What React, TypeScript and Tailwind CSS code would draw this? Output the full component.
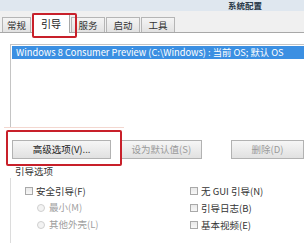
import React from "react";

const font = { fontFamily: '"Noto Sans CJK SC", "Noto Sans", sans-serif' };

function Tab({ label, selected }: { label: string; selected?: boolean }) {
  if (selected) {
    return (
      <div className="h-[20px] w-[38px] bg-white border border-[#a8a8a8] border-b-0 flex items-center justify-center text-[10px] text-[#222] -mb-px relative z-10">
        {label}
      </div>
    );
  }
  return (
    <div className="h-[15px] flex items-center justify-center border border-[#b5b5b5] border-b-0 bg-gradient-to-b from-[#f4f4f4] to-[#e2e2e2] text-[9.5px] text-[#333]" style={{ width: label === "常规" ? 29 : 34 }}>
      {label}
    </div>
  );
}

function Btn({ label, w, dim }: { label: string; w: number; dim?: boolean }) {
  return (
    <div
      className={`h-[19px] flex items-center justify-center border border-[#b2b2b2] bg-gradient-to-b from-[#f6f6f6] to-[#e1e1e1] text-[9.5px] ${dim ? "text-[#9a9a9a]" : "text-[#222]"}`}
      style={{ width: w }}
    >
      {label}
    </div>
  );
}

function Check({ label }: { label: string }) {
  return (
    <div className="flex items-center gap-[3px] h-[16px]">
      <div className="w-[8px] h-[8px] border border-[#a9a9a9] bg-gradient-to-b from-[#e9e9e9] to-[#f7f7f7]" />
      <span className="text-[9.5px] text-[#333]">{label}</span>
    </div>
  );
}

function Radio({ label }: { label: string }) {
  return (
    <div className="flex items-center gap-[4px] h-[17px] pl-[12px]">
      <div className="w-[8px] h-[8px] rounded-full border border-[#cfcfcf] bg-[#f3f3f3]" />
      <span className="text-[9.5px] text-[#a0a0a0]">{label}</span>
    </div>
  );
}

export default function App() {
  return (
    <div className="w-[304px] h-[243px] overflow-hidden bg-white relative" style={font}>
      {/* title bar */}
      <div className="h-[11px] bg-[#dfe7ef] flex justify-end items-start pr-[42px]">
        <span className="text-[8.5px] leading-[10px] font-bold text-[#2a3a4a]">系统配置</span>
      </div>
      {/* tab strip */}
      <div className="h-[22px] bg-[#f0f0f0] flex items-end pl-[2px] gap-[1px] border-b border-[#a8a8a8]">
        <Tab label="常规" />
        <Tab label="引导" selected />
        <Tab label="服务" />
        <Tab label="启动" />
        <Tab label="工具" />
      </div>
      {/* content */}
      <div className="flex flex-col">
        <div className="ml-[10px] mt-[11px] h-[83px] border-l border-t border-[#c4c4c4] bg-white">
          <div className="h-[13px] ml-[1px] mt-[1px] bg-[#3b8fe2] flex items-center pl-[4px] text-[9.3px] text-white whitespace-nowrap overflow-hidden">
            Windows 8 Consumer Preview (C:\Windows) : 当前 OS; 默认 OS
          </div>
        </div>
        <div className="ml-[4px] h-px w-[120px] bg-[#f3d7d0]" />
        <div className="flex items-center gap-[10px] pl-[12px] mt-[12px]">
          <Btn label="高级选项(V)..." w={106} />
          <Btn label="设为默认值(S)" w={86} dim />
          <div className="w-[10px]" />
          <Btn label="删除(D)" w={78} dim />
        </div>
        <div className="pl-[15px] mt-[5px] text-[9.5px] text-[#333] h-[14px] leading-[14px]">引导选项</div>
        <div className="flex ml-[10px] border-l border-[#dcdcdc] pt-[5px] pb-[10px]">
          <div className="flex flex-col pl-[14px] w-[179px]">
            <Check label="安全引导(F)" />
            <Radio label="最小(M)" />
            <Radio label="其他外壳(L)" />
          </div>
          <div className="flex flex-col">
            <Check label="无 GUI 引导(N)" />
            <div className="h-[1px]" />
            <Check label="引导日志(B)" />
            <div className="h-[1px]" />
            <Check label="基本视频(E)" />
          </div>
        </div>
      </div>
      {/* red annotation boxes */}
      <div className="absolute left-[32px] top-[13px] w-[45px] h-[25px] border-2 border-[#c8202a] rounded-[2px] z-20" />
      <div className="absolute left-[6px] top-[130px] w-[116px] h-[36px] border-2 border-[#c8202a] rounded-[2px] z-20" />
    </div>
  );
}
